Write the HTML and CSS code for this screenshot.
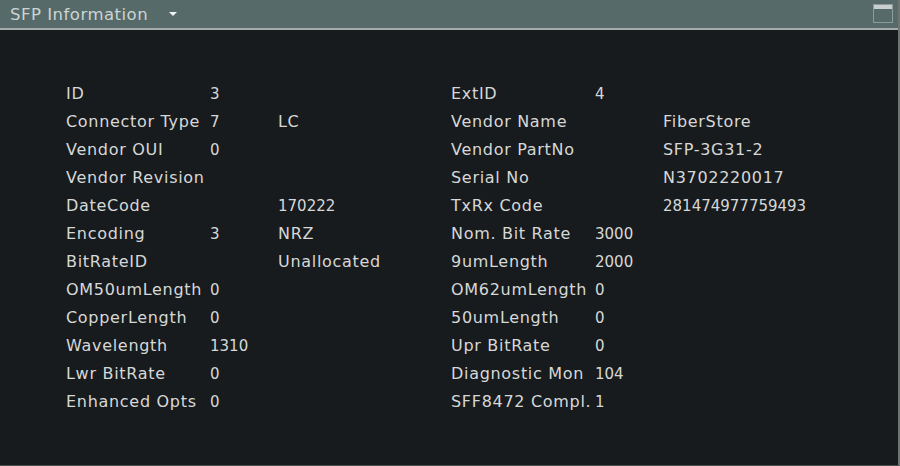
FILE: index.html
```html
<!DOCTYPE html>
<html>
<head>
<meta charset="utf-8">
<link rel="stylesheet" href="styles.css">
</head>
<body>
<div class="panel">
  <div class="header">
    <div class="title">SFP Information <span class="caret"></span></div>
    <svg class="maxicon" width="20" height="19" viewBox="0 0 20 19">
      <rect x="0.5" y="0.5" width="19" height="18" fill="none" stroke="#8e9b9a" stroke-width="1"/>
      <rect x="1" y="1" width="18" height="4" fill="#c9cfcf"/>
    </svg>
  </div>
  <div class="body">
    <div class="grid">
      <div class="half">
        <span>ID</span><span class="num">3</span><span></span>
        <span>Connector Type</span><span class="num">7</span><span>LC</span>
        <span>Vendor OUI</span><span class="num">0</span><span></span>
        <span>Vendor Revision</span><span></span><span></span>
        <span>DateCode</span><span></span><span class="num">170222</span>
        <span>Encoding</span><span class="num">3</span><span>NRZ</span>
        <span>BitRateID</span><span></span><span>Unallocated</span>
        <span>OM50umLength</span><span class="num">0</span><span></span>
        <span>CopperLength</span><span class="num">0</span><span></span>
        <span>Wavelength</span><span class="num">1310</span><span></span>
        <span>Lwr BitRate</span><span class="num">0</span><span></span>
        <span>Enhanced Opts</span><span class="num">0</span><span></span>
      </div>
      <div class="half">
        <span>ExtID</span><span class="num">4</span><span></span>
        <span>Vendor Name</span><span></span><span>FiberStore</span>
        <span>Vendor PartNo</span><span></span><span>SFP-3G31-2</span>
        <span>Serial No</span><span></span><span>N3702220017</span>
        <span>TxRx Code</span><span></span><span class="num">281474977759493</span>
        <span>Nom. Bit Rate</span><span class="num">3000</span><span></span>
        <span>9umLength</span><span class="num">2000</span><span></span>
        <span>OM62umLength</span><span class="num">0</span><span></span>
        <span>50umLength</span><span class="num">0</span><span></span>
        <span>Upr BitRate</span><span class="num">0</span><span></span>
        <span>Diagnostic Mon</span><span class="num">104</span><span></span>
        <span>SFF8472 Compl.</span><span class="num">1</span><span></span>
      </div>
    </div>
  </div>
</div>
</body>
</html>
```

FILE: styles.css
```css
html, body {
  margin: 0;
  padding: 0;
  background: #181b1d;
}
body {
  width: 900px;
  height: 466px;
  overflow: hidden;
  font-family: "DejaVu Sans", "Noto Sans", sans-serif;
}
.panel {
  width: 898px;
  height: 465px;
  border-right: 2px solid #6c7474;
  border-bottom: 1px solid #4a5050;
  display: flex;
  flex-direction: column;
}
.header {
  height: 28px;
  background: #566b69;
  border-bottom: 2px solid #a3abab;
  display: flex;
  align-items: center;
  justify-content: space-between;
  padding: 0 5px 0 10px;
}
.title {
  color: #cdd4d4;
  font-size: 16.5px;
  letter-spacing: 0.5px;
  display: flex;
  align-items: center;
}
.caret {
  margin-left: 21px;
  width: 0;
  height: 0;
  border-left: 4px solid transparent;
  border-right: 4px solid transparent;
  border-top: 4px solid #f2f4f4;
}
.maxicon {
  display: block;
  margin-top: -1px;
}
.body {
  flex: 1;
  background: #181b1d;
  padding: 50px 0 0 66px;
}
.grid {
  display: grid;
  grid-template-columns: 385px 385px;
}
.half {
  display: grid;
  grid-template-columns: 144px 68px auto;
  grid-auto-rows: 28px;
  align-items: baseline;
  line-height: 28px;
  color: #d6d8d8;
  font-size: 16px;
  letter-spacing: 0.7px;
  white-space: nowrap;
}
.half .num {
  font-size: 15px;
  letter-spacing: 0;
}
```
